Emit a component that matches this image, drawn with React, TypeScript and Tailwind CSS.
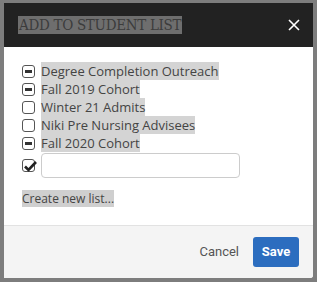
import React from 'react';

const lists = [
  { name: 'Degree Completion Outreach', state: 'mixed' },
  { name: 'Fall 2019 Cohort', state: 'mixed' },
  { name: 'Winter 21 Admits', state: 'off' },
  { name: 'Niki Pre Nursing Advisees', state: 'off' },
  { name: 'Fall 2020 Cohort', state: 'mixed' },
];

function Box({ state }: { state: string }) {
  return (
    <span className="relative w-[13px] h-[13px] rounded-[3px] border border-[#555] bg-white flex items-center justify-center shrink-0">
      {state === 'mixed' && <span className="w-[7px] h-[3px] bg-[#333]" />}
      {state === 'on' && (
        <svg width="13" height="11" viewBox="0 0 13 11" className="absolute left-[1px] top-[1px]">
          <path d="M1 5.5 L4.5 9 L12 1" fill="none" stroke="#222" strokeWidth="2.6" />
        </svg>
      )}
    </span>
  );
}

export default function App() {
  return (
    <div className="w-[317px] h-[282px] bg-[#7d7d7d] pl-[4px] pt-[3px] overflow-hidden">
      <div className="w-[309px] h-[275px] bg-white flex flex-col rounded-br-[3px] overflow-hidden">
        <div className="h-[44px] bg-[#222] flex items-center justify-between pl-[14px] pr-[13px] shrink-0">
          <span className="bg-[#6e6e6e] text-[#3c3c3c] text-[15px] leading-[18px] px-[1px] font-['DejaVu_Serif_Condensed','DejaVu_Serif',serif] tracking-[-0.3px]">
            ADD TO STUDENT LIST
          </span>
          <svg width="12" height="12" viewBox="0 0 12 12">
            <path d="M1 1 L11 11 M11 1 L1 11" stroke="#fff" strokeWidth="1.6" />
          </svg>
        </div>
        <div className="flex-1 pl-[18px] pt-[15px] font-['Open_Sans',sans-serif]">
          {lists.map((l) => (
            <div key={l.name} className="flex items-center gap-[6px] h-[18px]">
              <Box state={l.state} />
              <span className="bg-[#d4d4d4] text-[#444] text-[13px] leading-[18px]">{l.name}</span>
            </div>
          ))}
          <div className="flex items-center gap-[6px] mt-[1px]">
            <Box state="on" />
            <input className="w-[199px] h-[25px] rounded-[4px] border border-[#ccc] outline-none" />
          </div>
          <div className="mt-[7px]">
            <span className="bg-[#cfcfcf] text-[#444] text-[12px] leading-[15px]">Create new list...</span>
          </div>
        </div>
        <div className="h-[53px] bg-[#f4f4f4] border-t border-[#e2e2e2] flex items-center justify-end pr-[14px] gap-[6px] shrink-0 font-['Roboto',sans-serif]">
          <button className="text-[#555] text-[13px] px-[8px] h-[30px]">Cancel</button>
          <button className="bg-[#2c6dbf] text-white text-[13px] font-bold w-[46px] h-[30px] rounded-[3px]">Save</button>
        </div>
      </div>
    </div>
  );
}
